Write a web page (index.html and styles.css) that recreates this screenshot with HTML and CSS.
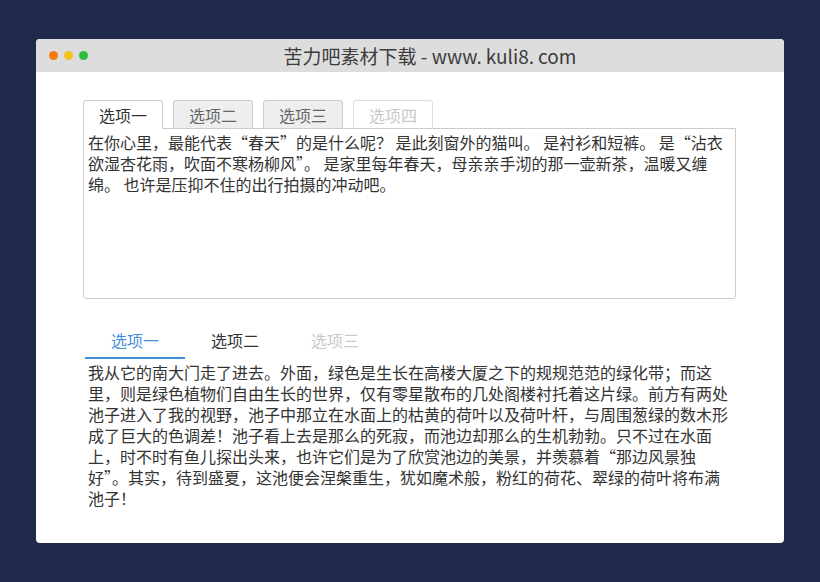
FILE: index.html
```html
<!DOCTYPE html>
<html lang="zh-CN">
<head>
<meta charset="utf-8">
<title>苦力吧素材下载</title>
<link rel="stylesheet" href="styles.css">
</head>
<body>
<div class="window">
  <div class="titlebar">
    <div class="dots">
      <span class="dot dot-orange"></span>
      <span class="dot dot-yellow"></span>
      <span class="dot dot-green"></span>
    </div>
    <div class="title">苦力吧素材下载 - www<span class="dotsep">.</span>kuli8<span class="dotsep">.</span>com</div>
  </div>
  <div class="content">
    <div class="card-tabs">
      <ul class="tab-list">
        <li class="tab active">选项一</li>
        <li class="tab">选项二</li>
        <li class="tab">选项三</li>
        <li class="tab disabled">选项四</li>
      </ul>
      <div class="tab-panel">在你心里，最能代表“春天”的是什么呢？ 是此刻窗外的猫叫。 是衬衫和短裤。 是“沾衣欲湿杏花雨，吹面不寒杨柳风”。 是家里每年春天，母亲亲手沏的那一壶新茶，温暖又缠绵。 也许是压抑不住的出行拍摄的冲动吧。</div>
    </div>
    <div class="line-tabs">
      <ul class="line-tab-list">
        <li class="line-tab active">选项一</li>
        <li class="line-tab">选项二</li>
        <li class="line-tab disabled">选项三</li>
      </ul>
      <div class="line-panel">我从它的南大门走了进去。外面，绿色是生长在高楼大厦之下的规规范范的绿化带；而这里，则是绿色植物们自由生长的世界，仅有零星散布的几处阁楼衬托着这片绿。前方有两处池子进入了我的视野，池子中那立在水面上的枯黄的荷叶以及荷叶杆，与周围葱绿的数木形成了巨大的色调差！池子看上去是那么的死寂，而池边却那么的生机勃勃。只不过在水面上，时不时有鱼儿探出头来，也许它们是为了欣赏池边的美景，并羡慕着“那边风景独好”。其实，待到盛夏，这池便会涅槃重生，犹如魔术般，粉红的荷花、翠绿的荷叶将布满池子！</div>
    </div>
  </div>
</div>
</body>
</html>
```

FILE: styles.css
```css
* { box-sizing: border-box; }

html, body {
  margin: 0;
  padding: 0;
}

body {
  background: #1f2a4a;
  width: 820px;
  height: 582px;
  padding: 39px 0 0 36px;
  font-family: "Noto Sans CJK SC", "Noto Sans", sans-serif;
  color: #333;
}

.window {
  width: 748px;
  height: 504px;
  background: #fff;
  border-radius: 4px;
  overflow: hidden;
}

.titlebar {
  position: relative;
  height: 33px;
  background: #dddddd;
  display: flex;
  align-items: center;
  justify-content: center;
}

.dots {
  position: absolute;
  left: 13px;
  top: 12px;
  display: flex;
  gap: 6px;
}

.dot {
  width: 9px;
  height: 9px;
  border-radius: 50%;
  display: block;
}

.dot-orange { background: #f77b0b; }
.dot-yellow { background: #efc21f; }
.dot-green { background: #2fbe3c; }

.title {
  font-size: 19px;
  line-height: 33px;
  color: #3c3c3c;
  margin-left: 40px;
}

.dotsep {
  margin-right: 4px;
}

.content {
  padding: 28px 48px 0 47px;
}

ul {
  list-style: none;
  margin: 0;
  padding: 0;
}

.tab-list {
  display: flex;
  gap: 10px;
  margin-bottom: -1px;
  position: relative;
}

.tab {
  width: 80px;
  height: 29px;
  border: 1px solid #ccc;
  border-radius: 3px 3px 0 0;
  background: #eee;
  color: #666;
  font-size: 16px;
  line-height: 24px;
  padding-top: 2px;
  text-align: center;
}

.tab.active {
  background: #fff;
  color: #333;
  border-bottom-color: #fff;
}

.tab.disabled {
  background: #fff;
  color: #c8c8c8;
  border-color: #ddd;
  border-bottom-color: #ccc;
}

.tab-panel {
  width: 653px;
  height: 171px;
  border: 1px solid #ccc;
  border-radius: 0 0 3px 3px;
  padding: 3px 4px;
  font-size: 16px;
  line-height: 21px;
  color: #333;
}

.line-tabs {
  margin-top: 27px;
  width: 653px;
}

.line-tab-list {
  display: flex;
  margin-left: 2px;
}

.line-tab {
  width: 100px;
  font-size: 16px;
  line-height: 28px;
  padding-bottom: 3px;
  border-bottom: 2px solid transparent;
  text-align: center;
  color: #333;
}

.line-tab.active {
  color: #3f8fd9;
  border-bottom-color: #3f8fd9;
}

.line-tab.disabled {
  color: #c8c8c8;
}

.line-panel {
  margin-top: 3px;
  padding: 0 5px;
  font-size: 16px;
  line-height: 21px;
  color: #333;
}
```
